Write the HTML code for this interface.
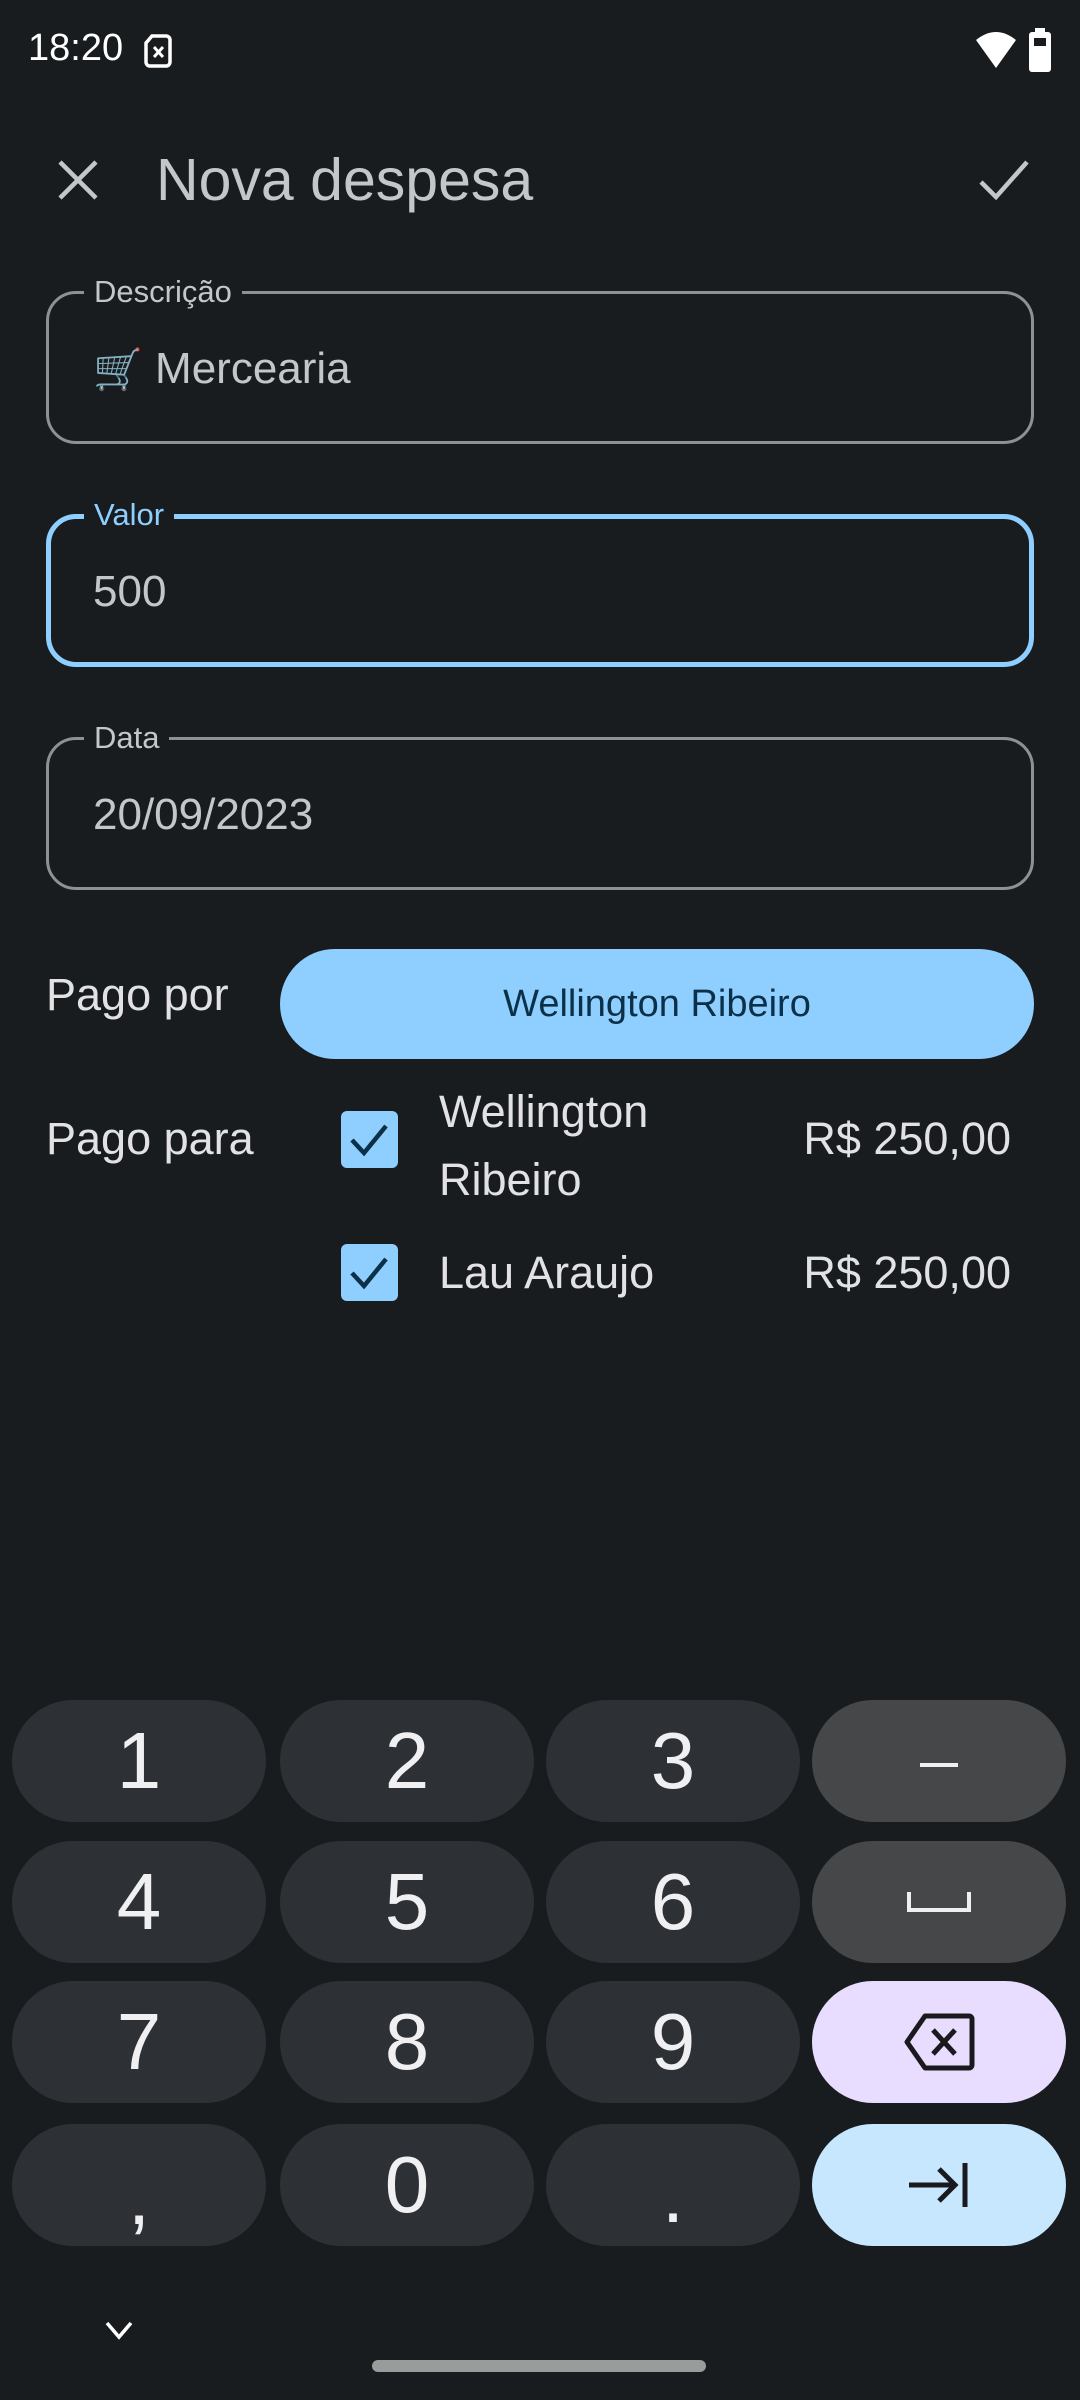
<!DOCTYPE html>
<html><head><meta charset="utf-8"><style>
*{margin:0;padding:0;box-sizing:border-box}
body{width:1080px;height:2400px;background:#191c1e;font-family:"Liberation Sans",sans-serif;position:relative;overflow:hidden;color:#e2e2e5}
.a{position:absolute}
.field{position:absolute;left:46px;width:988px;height:153px;border:3px solid #8c9196;border-radius:30px}
.field .lbl{position:absolute;left:35px;top:-24px;background:#191c1e;padding:0 10px 0 10px;font-size:31px;color:#c4c7c9;line-height:44px}
.field .val{position:absolute;left:44px;top:50px;font-size:44px;color:#c4c7c9;line-height:50px}
.key{position:absolute;width:254px;height:122px;border-radius:61px;background:#2d3135;color:#f0f0f2;font-size:80px;display:flex;align-items:center;justify-content:center;line-height:1}
.cb{position:absolute;left:341px;width:57px;height:57px;background:#8ecfff;border-radius:6px}
.t{font-size:45px}
</style></head><body>
<div class="a" style="left:28px;top:27px;font-size:38px;color:#fff">18:20</div>
<svg class="a" style="left:144px;top:34px" width="30" height="34" viewBox="0 0 30 34"><path d="M8 2h14a4 4 0 0 1 4 4v22a4 4 0 0 1-4 4H6a4 4 0 0 1-4-4V9z" fill="none" stroke="#fff" stroke-width="3.5"/><path d="M10 13l9 10M19 13l-9 10" stroke="#fff" stroke-width="3"/></svg>
<svg class="a" style="left:974px;top:30px" width="44" height="40" viewBox="0 0 44 40"><path d="M2 10Q22-6 42 10L22 38z" fill="#fff"/></svg>
<svg class="a" style="left:1028px;top:28px" width="24" height="44" viewBox="0 0 24 44"><rect x="7" y="0" width="10" height="5" fill="#fff"/><rect x="1" y="4" width="22" height="40" rx="3" fill="#fff"/><rect x="6" y="10" width="12" height="8" fill="#191c1e"/></svg>

<svg class="a" style="left:56px;top:158px" width="44" height="44" viewBox="0 0 44 44"><path d="M4 4l36 36M40 4L4 40" stroke="#c4c7c9" stroke-width="4.5"/></svg>
<div class="a" style="left:156px;top:146px;font-size:59px;color:#c4c7c9">Nova despesa</div>
<svg class="a" style="left:978px;top:158px" width="52" height="44" viewBox="0 0 52 44"><path d="M3 24l15 15L49 4" fill="none" stroke="#c4c7c9" stroke-width="4.5"/></svg>

<div class="field" style="top:291px"><div class="lbl">Descrição</div><div class="val"><span style="font-family:'DejaVu Sans';color:#6aaed0;font-size:40px">🛒</span> Mercearia</div></div>
<div class="field" style="top:514px;border:5px solid #8ecfff"><div class="lbl" style="color:#8ecfff;left:33px;top:-26px">Valor</div><div class="val" style="left:42px;top:48px">500</div></div>
<div class="field" style="top:737px"><div class="lbl">Data</div><div class="val">20/09/2023</div></div>

<div class="a t" style="left:46px;top:969px">Pago por</div>
<div class="a" style="left:280px;top:949px;width:754px;height:110px;border-radius:55px;background:#8ecfff;color:#0b3048;font-size:38px;display:flex;align-items:center;justify-content:center">Wellington Ribeiro</div>

<div class="a t" style="left:46px;top:1113px">Pago para</div>
<div class="cb" style="top:1111px"></div>
<svg class="a" style="left:348px;top:1122px" width="44" height="36" viewBox="0 0 44 36"><path d="M4 18l12 13L38 4" fill="none" stroke="#0b3048" stroke-width="4.5"/></svg>
<div class="a t" style="left:439px;top:1078px;line-height:68px">Wellington<br>Ribeiro</div>
<div class="a t" style="right:69px;top:1113px">R$ 250,00</div>
<div class="cb" style="top:1244px"></div>
<svg class="a" style="left:348px;top:1255px" width="44" height="36" viewBox="0 0 44 36"><path d="M4 18l12 13L38 4" fill="none" stroke="#0b3048" stroke-width="4.5"/></svg>
<div class="a t" style="left:439px;top:1247px">Lau Araujo</div>
<div class="a t" style="right:69px;top:1247px">R$ 250,00</div>

<div class="key" style="left:12px;top:1700px">1</div>
<div class="key" style="left:280px;top:1700px">2</div>
<div class="key" style="left:546px;top:1700px">3</div>
<div class="key" style="left:812px;top:1700px;background:#464749"><div style="width:38px;height:4px;background:#f0f0f2;margin-top:8px"></div></div>
<div class="key" style="left:12px;top:1841px">4</div>
<div class="key" style="left:280px;top:1841px">5</div>
<div class="key" style="left:546px;top:1841px">6</div>
<div class="key" style="left:812px;top:1841px;background:#464749"><svg width="64" height="24" viewBox="0 0 64 24"><path d="M2 2v18h60V2" fill="none" stroke="#f0f0f2" stroke-width="4"/></svg></div>
<div class="key" style="left:12px;top:1981px">7</div>
<div class="key" style="left:280px;top:1981px">8</div>
<div class="key" style="left:546px;top:1981px">9</div>
<div class="key" style="left:812px;top:1981px;background:#e8ddff"><svg width="72" height="60" viewBox="0 0 72 60"><path d="M22 4h44a3 3 0 0 1 3 3v46a3 3 0 0 1-3 3H22L4 30z" fill="none" stroke="#1a1a1e" stroke-width="5" stroke-linejoin="round"/><path d="M30 18l22 24M52 18L30 42" stroke="#1a1a1e" stroke-width="5"/></svg></div>
<div class="key" style="left:12px;top:2124px"><span style="margin-top:24px">,</span></div>
<div class="key" style="left:280px;top:2124px">0</div>
<div class="key" style="left:546px;top:2124px"><span style="margin-top:20px">.</span></div>
<div class="key" style="left:812px;top:2124px;background:#c7e7ff"><svg width="64" height="52" viewBox="0 0 64 52"><path d="M2 26h46M32 10l16 16-16 16" fill="none" stroke="#1a1a1e" stroke-width="5"/><path d="M58 4v44" stroke="#1a1a1e" stroke-width="5"/></svg></div>

<svg class="a" style="left:104px;top:2320px" width="30" height="22" viewBox="0 0 30 22"><path d="M3 3l12 14L27 3" fill="none" stroke="#fff" stroke-width="3.5"/></svg>
<div class="a" style="left:372px;top:2360px;width:334px;height:12px;border-radius:6px;background:#9a9b9b"></div>
</body></html>
